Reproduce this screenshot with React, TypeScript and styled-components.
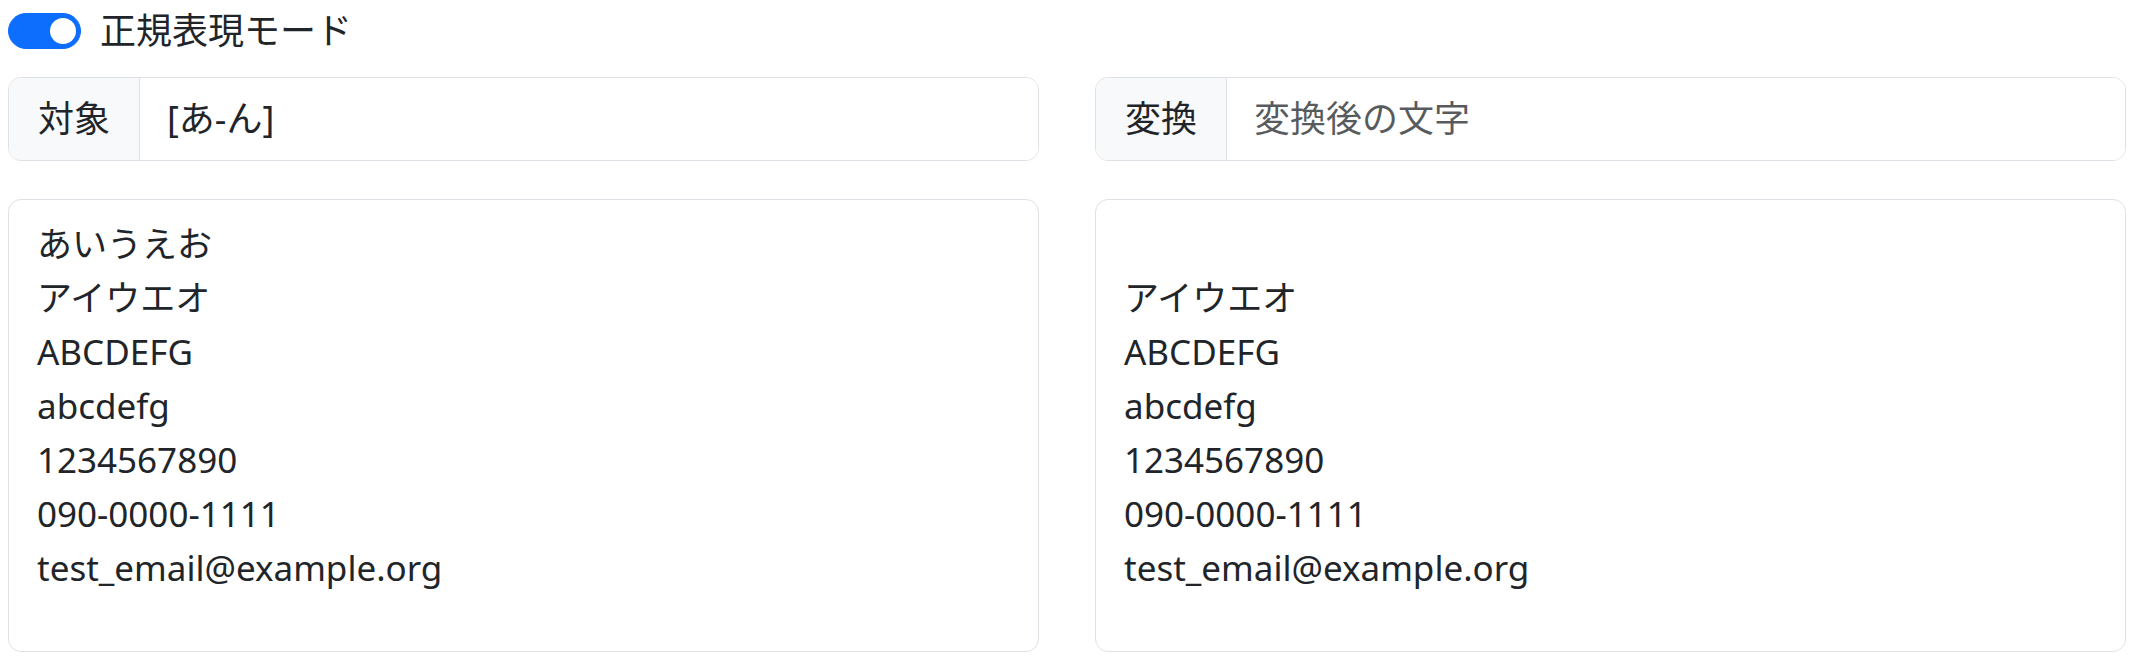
import styled, { createGlobalStyle } from "styled-components";

const GlobalStyle = createGlobalStyle`
  body {
    margin: 0;
    background: #fff;
    color: #212529;
    font-family: "Noto Sans", "Noto Sans CJK JP", sans-serif;
    font-size: 35px;
    line-height: 54px;
  }
`;

const Page = styled.div`
  padding: 0 5px 0 8px;
`;

const ModeBar = styled.label`
  display: flex;
  align-items: center;
  gap: 19px;
  height: 62px;
  margin-bottom: 15px;
  font-size: 36px;
  cursor: pointer;
`;

const Switch = styled.span<{ $on: boolean }>`
  position: relative;
  width: 73px;
  height: 36px;
  border-radius: 18px;
  background: ${(p) => (p.$on ? "#0d6efd" : "#fff")};
  border: 1px solid ${(p) => (p.$on ? "#0d6efd" : "#dee2e6")};
  box-sizing: border-box;
  &::after {
    content: "";
    position: absolute;
    top: 4px;
    ${(p) => (p.$on ? "right: 4px;" : "left: 4px;")}
    width: 26px;
    height: 26px;
    border-radius: 50%;
    background: ${(p) => (p.$on ? "#fff" : "#adb5bd")};
  }
`;

const Grid = styled.div<{ $gapBelow?: number }>`
  display: grid;
  grid-template-columns: 1fr 1fr;
  column-gap: 56px;
  margin-bottom: ${(p) => p.$gapBelow ?? 0}px;
`;

const InputGroup = styled.div`
  display: flex;
  height: 84px;
  border: 1px solid #dee2e6;
  border-radius: 13px;
  overflow: hidden;
  box-sizing: border-box;
  font-size: 36px;
`;

const Addon = styled.span`
  display: flex;
  align-items: center;
  padding: 0 29px 0 29px;
  background: #f8f9fa;
  border-right: 1px solid #dee2e6;
  white-space: nowrap;
`;

const TextInput = styled.input`
  flex: 1;
  min-width: 0;
  border: none;
  outline: none;
  padding: 0 27px;
  font: inherit;
  color: #212529;
  background: #fff;
  &::placeholder {
    color: rgba(33, 37, 41, 0.75);
  }
`;

const TextArea = styled.textarea`
  display: block;
  width: 100%;
  height: 453px;
  box-sizing: border-box;
  padding: 17px 28px;
  border: 1px solid #dee2e6;
  border-radius: 13px;
  font: inherit;
  color: #212529;
  resize: none;
  outline: none;
  overflow: hidden;
`;

const source = [
  "あいうえお",
  "アイウエオ",
  "ABCDEFG",
  "abcdefg",
  "1234567890",
  "090-0000-1111",
  "test_email@example.org",
].join("\n");

const pattern = "[あ-ん]";
const replacement = "";
const result = source.replace(new RegExp(pattern, "g"), replacement);

export default function App() {
  return (
    <Page>
      <GlobalStyle />
      <ModeBar>
        <Switch $on={true} role="switch" aria-checked="true" />
        正規表現モード
      </ModeBar>
      <Grid $gapBelow={38}>
        <InputGroup>
          <Addon>対象</Addon>
          <TextInput defaultValue={pattern} />
        </InputGroup>
        <InputGroup>
          <Addon>変換</Addon>
          <TextInput placeholder="変換後の文字" defaultValue={replacement} />
        </InputGroup>
      </Grid>
      <Grid>
        <TextArea defaultValue={source} />
        <TextArea defaultValue={result} readOnly />
      </Grid>
    </Page>
  );
}
